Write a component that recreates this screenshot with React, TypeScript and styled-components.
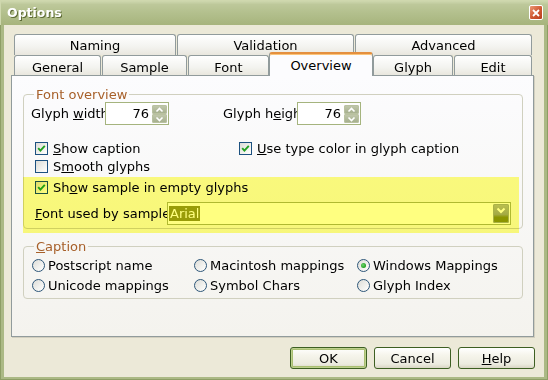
import React from 'react';
import styled, { createGlobalStyle, css } from 'styled-components';

const GlobalStyle = createGlobalStyle`
  html, body {
    margin: 0;
    padding: 0;
  }
  body {
    width: 548px;
    height: 380px;
    overflow: hidden;
    font-family: "DejaVu Sans", Verdana, sans-serif;
    font-size: 13px;
    color: #000;
  }
`;

const Window = styled.div`
  width: 548px;
  height: 380px;
  display: flex;
  flex-direction: column;
  background: #abb985;
  box-shadow: inset 0 0 0 1px #8e9e66;
`;

const TitleBar = styled.div`
  height: 25px;
  flex: none;
  display: flex;
  align-items: center;
  justify-content: space-between;
  padding: 0 5px 0 7px;
  background: linear-gradient(#d3dcb4 0%, #bdc89a 18%, #b2bf8c 55%, #a7b47d 100%);
  box-shadow: inset 1px 1px 0 #cfd8ae;
`;

const Title = styled.span`
  font-weight: bold;
  font-size: 12.5px;
  color: #fff;
  text-shadow: 1px 1px 0 #5d6a35;
`;

const CloseButton = styled.div`
  width: 14px;
  height: 15px;
  box-sizing: border-box;
  border: 1px solid #fff;
  border-radius: 2px;
  background: linear-gradient(135deg, #eb9a76, #cf5630 55%, #b8401f);
  display: flex;
  align-items: center;
  justify-content: center;
`;

const Body = styled.div`
  flex: 1;
  margin: 0 4px 3px 4px;
  background: #ece9d8;
  display: flex;
  flex-direction: column;
  padding: 9px 10px 0 7px;
`;

const TabRow = styled.div<{ $h: number }>`
  display: flex;
  gap: 1px;
  padding-left: 3px;
  height: ${p => p.$h}px;
  flex: none;
`;

const Tab = styled.div<{ $w: number; $active?: boolean; $pad: number }>`
  width: ${p => p.$w}px;
  box-sizing: border-box;
  border: 1px solid #919b9c;
  border-bottom: none;
  border-radius: 3px 3px 0 0;
  background: linear-gradient(#ffffff, #f3f3ef 60%, #e9e7de);
  display: flex;
  align-items: center;
  justify-content: center;
  padding-top: ${p => p.$pad}px;
  white-space: nowrap;
  ${p =>
    p.$active &&
    css`
      height: 24px;
      margin: -3px -1px -1px -1px;
      width: ${p.$w + 1}px;
      position: relative;
      z-index: 1;
      background: #fcfcfe;
      border-top: 2px solid #e48f3e;
      box-shadow: inset 0 1px 0 #fbc47a;
      padding-top: 0;
    `}
`;

const Panel = styled.div`
  flex: none;
  height: 262px;
  box-sizing: border-box;
  border: 1px solid #919b9c;
  background: linear-gradient(#fcfcfe, #f4f3ee);
  box-shadow: 1px 1px 0 #d2cfbf;
  padding: 11px 10px 0 11px;
`;

const Group = styled.fieldset<{ $top?: number }>`
  margin: ${p => p.$top ?? 0}px 0 0 0;
  padding: 0 7px 3px 7px;
  border: 1px solid #d0d0bf;
  border-radius: 4px;
  min-width: 0;
`;

const Legend = styled.legend`
  padding: 0 2px;
  margin-left: 3px;
  line-height: 15px;
  color: #a7602a;
`;

const SpinRow = styled.div`
  display: flex;
  align-items: center;
  height: 23px;
`;

const FieldLabel = styled.span<{ $w: number; $gap?: number }>`
  width: ${p => p.$w}px;
  margin-left: ${p => p.$gap ?? 0}px;
  flex: none;
  overflow: hidden;
  white-space: nowrap;
`;

const SpinBox = styled.div`
  width: 64px;
  height: 23px;
  flex: none;
  box-sizing: border-box;
  border: 1px solid #a5b47e;
  background: #fff;
  display: flex;
  padding: 1px 1px 1px 0;
`;

const SpinValue = styled.span`
  flex: 1;
  text-align: right;
  padding-right: 3px;
  line-height: 19px;
`;

const SpinButtons = styled.div`
  width: 15px;
  display: flex;
  flex-direction: column;
  padding-top: 1px;
`;

const SpinBtn = styled.div`
  flex: 1;
  border-radius: 2px;
  background: linear-gradient(#c3caae, #a3ad8b);
  box-shadow: inset 0 0 0 1px #b9c1a0;
  display: flex;
  align-items: center;
  justify-content: center;
`;

const CheckGrid = styled.div`
  display: grid;
  grid-template-columns: 204px auto;
  grid-auto-rows: 18px;
  margin-top: 14px;
  padding-left: 4px;
`;

const Item = styled.label<{ $gap: number }>`
  display: flex;
  align-items: center;
  gap: ${p => p.$gap}px;
  white-space: nowrap;
`;

const Box = styled.span`
  width: 13px;
  height: 13px;
  flex: none;
  box-sizing: border-box;
  border: 1px solid #1c5180;
  background: linear-gradient(135deg, #dcdcd7, #fbfbf9 85%);
  display: flex;
  align-items: center;
  justify-content: center;
`;

const Highlight = styled.div`
  position: relative;
  padding: 3px 0 0 4px;

  &::after {
    content: '';
    position: absolute;
    top: 2px;
    left: -8px;
    right: -4px;
    bottom: -8px;
    background: #ffff80;
    mix-blend-mode: multiply;
    pointer-events: none;
  }
`;

const CheckRow = styled.div`
  height: 18px;
  display: flex;
`;

const ComboRow = styled.div`
  display: flex;
  align-items: center;
  margin-top: 6px;
  height: 23px;
`;

const Combo = styled.div`
  width: 344px;
  height: 23px;
  flex: none;
  box-sizing: border-box;
  border: 1px solid #b0b962;
  background: #fff;
  display: flex;
  align-items: center;
  padding: 1px;
`;

const ComboText = styled.div`
  flex: 1;
  display: flex;
  align-items: center;
`;

const Selected = styled.span`
  background: #999c10;
  color: #fff;
  line-height: 15px;
  padding: 0 1px;
`;

const ComboButton = styled.div`
  width: 16px;
  height: 19px;
  border-radius: 2px;
  background: linear-gradient(#bcc19e, #a4aa88 55%, #8d9600 70%, #8a9400);
  box-shadow: inset 0 0 0 1px #aab28c;
  display: flex;
  align-items: flex-start;
  justify-content: center;
  padding-top: 3px;
  box-sizing: border-box;
`;

const RadioGrid = styled.div`
  display: grid;
  grid-template-columns: 162px 163px auto;
  grid-auto-rows: 20px;
  padding: 1px 0 0 1px;
`;

const Circle = styled.span<{ $on?: boolean }>`
  width: 13px;
  height: 13px;
  flex: none;
  box-sizing: border-box;
  border-radius: 50%;
  border: 1px solid #2e5779;
  background: linear-gradient(135deg, #dcdcd7, #fbfbf9 85%);
  display: flex;
  align-items: center;
  justify-content: center;

  &::after {
    content: '';
    display: ${p => (p.$on ? 'block' : 'none')};
    width: 5px;
    height: 5px;
    border-radius: 50%;
    background: radial-gradient(circle at 40% 40%, #6fd46f, #21a121 70%);
  }
`;

const ButtonBar = styled.div`
  display: flex;
  justify-content: flex-end;
  gap: 7px;
  margin: 10px -1px 0 0;
`;

const Button = styled.div<{ $default?: boolean }>`
  width: 77px;
  height: 22px;
  box-sizing: border-box;
  border: 1px solid #3d5f22;
  border-radius: 3px;
  background: linear-gradient(#ffffff, #f6f5ec 35%, #ecebdf 80%, #d9d5c5);
  display: flex;
  align-items: center;
  justify-content: center;
  ${p =>
    p.$default &&
    css`
      box-shadow: inset 0 0 0 1px #bdd08d, inset 0 0 0 2px #a9bf72;
    `}
`;

const Check: React.FC<{ on?: boolean }> = ({ on }) => (
  <Box>
    {on && (
      <svg width="9" height="9" viewBox="0 0 9 9">
        <path d="M1.2 4.2 L3.4 6.6 L7.8 1.8" fill="none" stroke="#21a121" strokeWidth="1.9" />
      </svg>
    )}
  </Box>
);

const CheckItem: React.FC<{ on?: boolean; children: React.ReactNode }> = ({ on, children }) => (
  <Item $gap={5}>
    <Check on={on} />
    <span>{children}</span>
  </Item>
);

const RadioItem: React.FC<{ on?: boolean; children: React.ReactNode }> = ({ on, children }) => (
  <Item $gap={3}>
    <Circle $on={on} />
    <span>{children}</span>
  </Item>
);

const Spin: React.FC<{ value: number }> = ({ value }) => (
  <SpinBox>
    <SpinValue>{value}</SpinValue>
    <SpinButtons>
      <SpinBtn>
        <svg width="9" height="6" viewBox="0 0 9 6">
          <path d="M1.5 4.5 L4.5 1.5 L7.5 4.5" fill="none" stroke="#fff" strokeWidth="1.6" />
        </svg>
      </SpinBtn>
      <SpinBtn>
        <svg width="9" height="6" viewBox="0 0 9 6">
          <path d="M1.5 1.5 L4.5 4.5 L7.5 1.5" fill="none" stroke="#fff" strokeWidth="1.6" />
        </svg>
      </SpinBtn>
    </SpinButtons>
  </SpinBox>
);

const backTabs = [
  { label: 'Naming', w: 162 },
  { label: 'Validation', w: 177 },
  { label: 'Advanced', w: 177 },
];

const frontTabs = [
  { label: 'General', w: 87 },
  { label: 'Sample', w: 85 },
  { label: 'Font', w: 81 },
  { label: 'Overview', w: 103, active: true },
  { label: 'Glyph', w: 80 },
  { label: 'Edit', w: 78 },
];

const App: React.FC = () => {
  return (
    <>
      <GlobalStyle />
      <Window>
        <TitleBar>
          <Title>Options</Title>
          <CloseButton>
            <svg width="8" height="8" viewBox="0 0 8 8">
              <path d="M1 1 L7 7 M7 1 L1 7" stroke="#fff" strokeWidth="1.8" />
            </svg>
          </CloseButton>
        </TitleBar>
        <Body>
          <TabRow $h={21}>
            {backTabs.map(t => (
              <Tab key={t.label} $w={t.w} $pad={1}>
                {t.label}
              </Tab>
            ))}
          </TabRow>
          <TabRow $h={20}>
            {frontTabs.map(t => (
              <Tab key={t.label} $w={t.w} $active={t.active} $pad={3}>
                {t.label}
              </Tab>
            ))}
          </TabRow>
          <Panel>
            <Group>
              <Legend>Font overview</Legend>
              <SpinRow>
                <FieldLabel $w={74}>
                  Glyph <u>w</u>idth
                </FieldLabel>
                <Spin value={76} />
                <FieldLabel $w={74} $gap={54}>
                  Glyph h<u>e</u>ight
                </FieldLabel>
                <Spin value={76} />
              </SpinRow>
              <CheckGrid>
                <CheckItem on>
                  <u>S</u>how caption
                </CheckItem>
                <CheckItem on>
                  <u>U</u>se type color in glyph caption
                </CheckItem>
                <CheckItem>
                  S<u>m</u>ooth glyphs
                </CheckItem>
              </CheckGrid>
              <Highlight>
                <CheckRow>
                  <CheckItem on>
                    Sh<u>o</u>w sample in empty glyphs
                  </CheckItem>
                </CheckRow>
                <ComboRow>
                  <FieldLabel $w={132}>
                    <u>F</u>ont used by sample
                  </FieldLabel>
                  <Combo>
                    <ComboText>
                      <Selected>Arial</Selected>
                    </ComboText>
                    <ComboButton>
                      <svg width="10" height="7" viewBox="0 0 10 7">
                        <path d="M1.5 1.5 L5 5 L8.5 1.5" fill="none" stroke="#fff" strokeWidth="2" />
                      </svg>
                    </ComboButton>
                  </Combo>
                </ComboRow>
              </Highlight>
            </Group>
            <Group $top={10}>
              <Legend>
                <u>C</u>aption
              </Legend>
              <RadioGrid>
                <RadioItem>Postscript name</RadioItem>
                <RadioItem>Macintosh mappings</RadioItem>
                <RadioItem on>Windows Mappings</RadioItem>
                <RadioItem>Unicode mappings</RadioItem>
                <RadioItem>Symbol Chars</RadioItem>
                <RadioItem>Glyph Index</RadioItem>
              </RadioGrid>
            </Group>
          </Panel>
          <ButtonBar>
            <Button $default>OK</Button>
            <Button>Cancel</Button>
            <Button>
              <u>H</u>elp
            </Button>
          </ButtonBar>
        </Body>
      </Window>
    </>
  );
};

export default App;
